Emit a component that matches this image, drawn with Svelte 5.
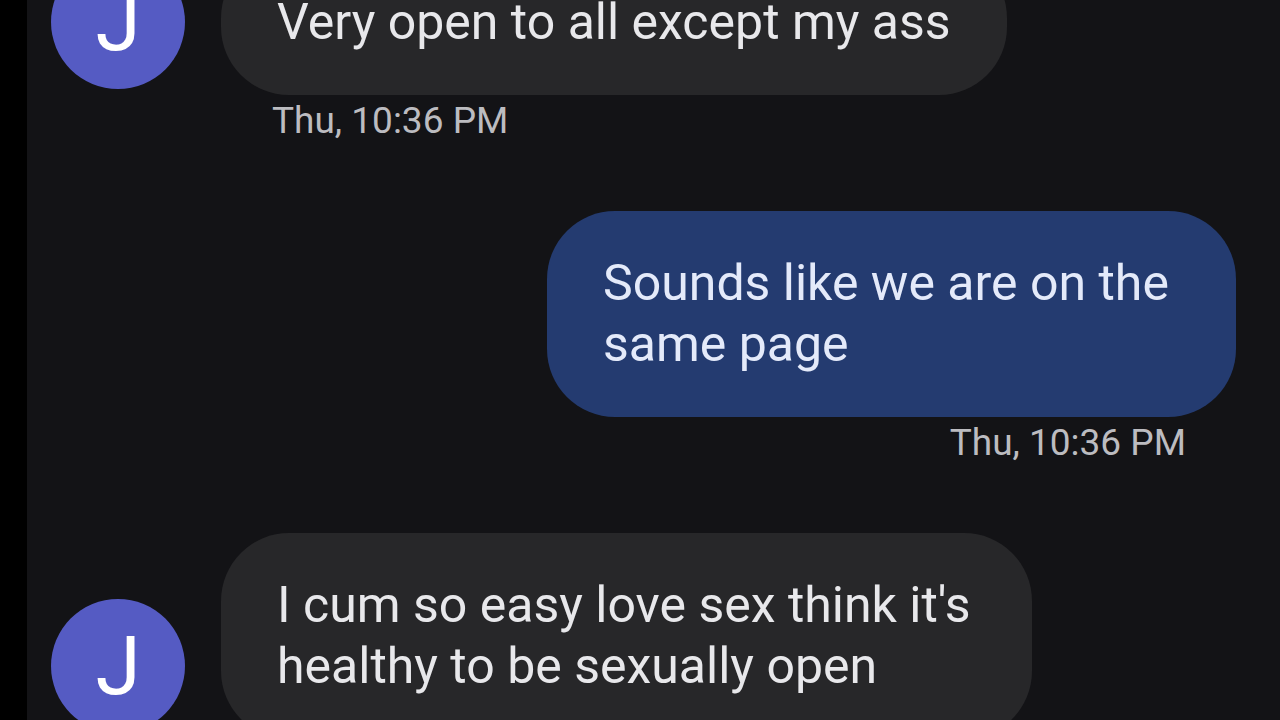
<script lang="ts">
  interface Message {
    id: number;
    sender: 'user' | 'contact';
    text: string;
    time: string;
  }

  const initial = 'J';

  const messages: Message[] = [
    { id: 1, sender: 'contact', text: 'Very open to all except my ass', time: 'Thu, 10:36 PM' },
    { id: 2, sender: 'user', text: 'Sounds like we are on the same page', time: 'Thu, 10:36 PM' },
    { id: 3, sender: 'contact', text: "I cum so easy love sex think it's healthy to be sexually open", time: '' }
  ];
</script>

<main class="chat">
  <div class="thread">
    {#each messages as message (message.id)}
      <article class="message {message.sender}">
        <div class="row">
          {#if message.sender === 'contact'}
            <div class="avatar">{initial}</div>
          {/if}
          <p class="bubble">{message.text}</p>
        </div>
        {#if message.time}
          <time class="timestamp">{message.time}</time>
        {/if}
      </article>
    {/each}
  </div>
</main>

<style>
  :global(body) {
    margin: 0;
    background: #131316;
  }

  /* newest message sits at the bottom, older ones scroll off the top */
  .chat {
    display: flex;
    flex-direction: column;
    justify-content: flex-end;
    height: 100vh;
    box-sizing: border-box;
    overflow: hidden;
    border-left: 27px solid #000;
    background: #131316;
    color: #e8e8eb;
    font-family: Roboto, sans-serif;
  }

  .thread {
    display: flex;
    flex-direction: column;
    gap: 64px;
    padding: 0 44px 0 24px;
    margin-bottom: -19px;
  }

  .message {
    display: flex;
    flex-direction: column;
  }

  .message.user {
    align-items: flex-end;
  }

  .row {
    display: flex;
    align-items: flex-end;
    gap: 36px;
  }

  .avatar {
    display: flex;
    align-items: center;
    justify-content: center;
    flex: none;
    width: 134px;
    height: 134px;
    margin-bottom: 6px;
    border-radius: 50%;
    background: #555bc3;
    color: #fff;
    font-size: 82px;
  }

  .bubble {
    box-sizing: border-box;
    max-width: 811px;
    margin: 0;
    padding: 42px 56px;
    border-radius: 68px;
    font-size: 50px;
    line-height: 61px;
  }

  .contact .bubble {
    background: #272729;
  }

  .user .bubble {
    max-width: 689px;
    background: #243b70;
    color: #e4eafa;
  }

  .timestamp {
    padding: 0 50px;
    color: #bcbcc0;
    font-size: 37px;
    line-height: 52px;
  }

  .contact .timestamp {
    padding-left: 221px;
  }
</style>
